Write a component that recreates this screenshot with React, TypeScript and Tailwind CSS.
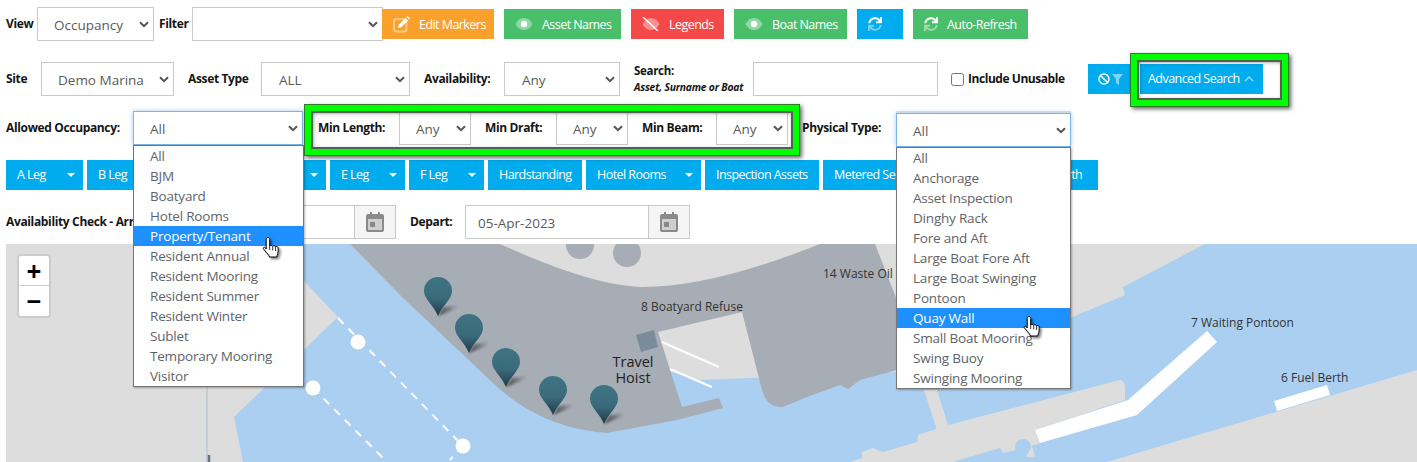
import React from "react";
import { Ban } from "lucide-react";

const occupancy = ["All", "BJM", "Boatyard", "Hotel Rooms", "Property/Tenant", "Resident Annual", "Resident Mooring", "Resident Summer", "Resident Winter", "Sublet", "Temporary Mooring", "Visitor"];
const physical = ["All", "Anchorage", "Asset Inspection", "Dinghy Rack", "Fore and Aft", "Large Boat Fore Aft", "Large Boat Swinging", "Pontoon", "Quay Wall", "Small Boat Mooring", "Swing Buoy", "Swinging Mooring"];

const Chevron = () => (
  <svg width="10" height="7" viewBox="0 0 10 7" className="shrink-0">
    <path d="M1 1.2l4 4 4-4" fill="none" stroke="#555" strokeWidth="2" />
  </svg>
);

const Select = ({ value = "", width, pad, focus }: { value?: string; width: string; pad: string; focus?: boolean }) => (
  <div className={`${width} ${pad} ${focus ? "border-[#7db4e6] shadow-[0_0_5px_#a9cdf0]" : "border-[#c9c9c9]"} h-[34px] shrink-0 flex items-center justify-between pr-[4px] border bg-white text-[13.5px] text-[#5a5a5a]`}>
    <span className="pt-[2px]">{value}</span>
    <Chevron />
  </div>
);

const Label = ({ children, className = "" }: { children: React.ReactNode; className?: string }) => (
  <span className={`text-[12px] font-bold text-[#151515] tracking-[-0.35px] whitespace-nowrap shrink-0 pb-[1px] ${className}`}>{children}</span>
);

const Eye = ({ slash }: { slash?: boolean }) => (
  <svg width="18" height="14" viewBox="0 0 18 14">
    <path d="M.5 7C2.5 3 5.5 1 9 1s6.500 2 8.500 6c-2 4-5 6-8.500 6S2.500 11 .5 7z" fill="#fff" opacity=".4" />
    {!slash && <circle cx="9" cy="7" r="3.200" fill="#fff" />}
    {slash && <path d="M1 0l15 14" stroke="#fff" strokeWidth="1.500" />}
  </svg>
);

const EditIcon = () => (
  <svg width="17" height="17" viewBox="0 0 17 17">
    <rect x="1" y="3" width="12.500" height="12.500" rx="2.500" fill="none" stroke="#fff" strokeOpacity=".45" strokeWidth="2" />
    <path d="M5.500 9L12.500 2l2.500 2.500-7 7-3 .5z" fill="#fff" />
    <path d="M13.500 1l1-1 2.500 2.500-1 1z" fill="#fff" />
  </svg>
);

const Sync = () => (
  <svg width="14" height="14" viewBox="0 0 512 512" fill="#fff">
    <path d="M440.65 12.57l4 82.77A247.16 247.16 0 0 0 255.83 8C134.73 8 33.91 94.92 12.29 209.82A12 12 0 0 0 24.09 224h49.05a12 12 0 0 0 11.67-9.26 175.91 175.91 0 0 1 317-56.94l-101.46-4.86a12 12 0 0 0-12.57 12v47.41a12 12 0 0 0 12 12H500a12 12 0 0 0 12-12V12a12 12 0 0 0-12-12h-47.37a12 12 0 0 0-11.98 12.57z" />
    <path opacity=".45" d="M255.83 432a175.61 175.61 0 0 1-146-77.8l101.8 4.87a12 12 0 0 0 12.57-12v-47.4a12 12 0 0 0-12-12H12a12 12 0 0 0-12 12V500a12 12 0 0 0 12 12h47.35a12 12 0 0 0 12-12.6l-4.15-82.57A247.17 247.17 0 0 0 255.83 504c121.11 0 221.93-86.92 243.55-201.82a12 12 0 0 0-11.8-14.18h-49.05a12 12 0 0 0-11.67 9.26A175.86 175.86 0 0 1 255.83 432z" />
  </svg>
);

const ActionBtn = ({ color, width, icon, children }: { color: string; width: string; icon: React.ReactNode; children?: React.ReactNode }) => (
  <div className={`${color} ${width} h-[30px] shrink-0 flex items-center pl-[11px] gap-[9px] text-white text-[12.5px] tracking-[-0.55px] whitespace-nowrap`}>
    {icon}
    {children && <span className="pt-[2px]">{children}</span>}
  </div>
);

const LegBtn = ({ label, width, caret }: { label: string; width: string; caret?: boolean }) => (
  <div className={`${width} h-[30px] shrink-0 flex items-center justify-between pl-[11px] pr-[8px] bg-[#00aced] text-white text-[12.5px] tracking-[-0.55px] whitespace-nowrap`}>
    <span className="pt-[1px]">{label}</span>
    {caret && <span className="w-0 h-0 border-x-[4px] border-x-transparent border-t-[4px] border-t-white" />}
  </div>
);

const Calendar = () => (
  <div className="w-[41px] h-full shrink-0 flex items-center justify-center border-l border-[#c9c9c9] bg-[#f5f5f5]">
    <svg width="18" height="20" viewBox="0 0 18 20">
      <path d="M4 0h2v3H4zM12 0h2v3h-2z" fill="#8a8a8a" />
      <rect x="0" y="2" width="18" height="18" rx="2" fill="#8a8a8a" />
      <rect x="2" y="7" width="14" height="11" fill="#cfcfcf" />
      <rect x="4" y="10" width="5" height="5" fill="#8a8a8a" />
    </svg>
  </div>
);

const Hand = ({ className }: { className: string }) => (
  <svg width="20" height="26" viewBox="0 0 20 26" className={`absolute drop-shadow-[2px_2px_1px_rgba(0,0,0,0.45)] ${className}`}>
    <path d="M6 1.500c1 0 1.700.8 1.700 1.800V10c.3-.8 2.600-1 3 .3.500-.8 2.500-.8 2.900.5.600-.6 2.400-.4 2.600 1 .1 1.800 0 4-.4 5.600-.4 1.400-1 2.300-1 3.600H7.500c-.3-1.500-1.400-2.600-2.800-4.200L1.500 13c-.8-1 .6-2.400 1.800-1.400L4.200 13V3.300C4.200 2.300 5 1.500 6 1.500z" fill="#fff" stroke="#000" strokeWidth="1" />
    <path d="M7.700 10v4M10.700 10.500v4M13.600 11v4" stroke="#000" strokeWidth=".8" />
  </svg>
);

const Dropdown = ({ items, active, className }: { items: string[]; active: string; className: string }) => (
  <div className={`absolute border border-[#767676] bg-white shadow-[1px_1px_2px_rgba(0,0,0,0.3)] ${className}`}>
    {items.map((item) => (
      <div key={item} className={`${item === active ? "bg-[#1e90ff] text-white" : "text-[#5f6368]"} h-[20px] pl-[16px] leading-[20px] text-[13.5px] tracking-[-0.2px] whitespace-nowrap`}>
        {item}
      </div>
    ))}
  </div>
);

const Highlight = ({ className }: { className: string }) => (
  <div className={`absolute border-[7px] border-[#00ff00] shadow-[2px_2px_4px_rgba(0,0,0,0.6),inset_0_0_0_2px_#555f55,inset_1px_1px_5px_rgba(0,0,0,0.7)] outline outline-1 -outline-offset-1 outline-[#2f7a2f] ${className}`} />
);

const pins = [[438, 316], [469, 353], [506, 387], [553, 415], [604, 424]];

const MapArt = () => (
  <svg viewBox="6 244 1411 218" className="block w-full h-full" style={{ fontFamily: "'Open Sans', sans-serif" }}>
    <defs>
      <linearGradient id="pin" x1="0" y1="0" x2="0" y2="1">
        <stop offset="0" stopColor="#3f7485" />
        <stop offset=".55" stopColor="#3a6a7a" />
        <stop offset="1" stopColor="#1f3a46" />
      </linearGradient>
      <linearGradient id="pinShadow" x1="0" y1="0" x2="1" y2="0">
        <stop offset="0" stopColor="#222" stopOpacity=".75" />
        <stop offset="1" stopColor="#222" stopOpacity="0" />
      </linearGradient>
      <filter id="soft" x="-30%" y="-60%" width="160%" height="220%">
        <feGaussianBlur stdDeviation="1" />
      </filter>
    </defs>
    <rect x="6" y="244" width="1411" height="218" fill="#dddddd" />
    <path d="M303 244L350 244 400 295 700 380 897 372 1070 318 1125 295 1123 287 1205 244 1417 244 1417 370 1107 462 243 462 234 417 338 317 303 280Z" fill="#abcff0" />
    <path d="M850 462L862 458 862 452 873 448 883 452 917 442 918 435 948 425 1120 380Q1125 381 1125 387L1125 400 1035 430 1040 443 1032 446 1003 453 1000 448 953 462Z" fill="#dddddd" />
    <path d="M924 390L937 430 948 425 937 390Z" fill="#dddddd" />
    <circle cx="1023" cy="447" r="8" fill="#abcff0" />
    <path d="M1032 446L1035 457 1026 457Z" fill="#dddddd" />
    <path d="M1035 430L1128 400 1207 331 1217 342 1137 415 1040 443Z" fill="#fff" />
    <path d="M1274 401L1327 385 1330 395 1277 411Z" fill="#fff" />
    <path d="M350 244L400 295 493 383Q540 428 607 433L677 420 723 408 719 398 682 407 658 332 742 312 762 390Q767 408 783 407L807 397 840 385 848 389 860 380 897 370 897 300 875 244 820 244Q710 288 640 287 590 285 500 244Z" fill="#a7adb5" />
    <circle cx="580" cy="245" r="14" fill="#a7adb5" />
    <circle cx="627" cy="253" r="14" fill="#a7adb5" />
    <path d="M636 335L654 330 658 347 641 352Z" fill="#7a8c9a" />
    <path d="M662 342L719 367M670 369L712 387" stroke="#fff" strokeWidth="2" />
    <path d="M338 318L463 446M313 388L385 460M463 446L450 460" stroke="#fff" strokeWidth="2" strokeDasharray="8 7" />
    <circle cx="358" cy="342" r="7.500" fill="#fff" />
    <circle cx="313" cy="388" r="7.500" fill="#fff" />
    <circle cx="463" cy="446" r="7.500" fill="#fff" />
    <path d="M207 385V462" stroke="#bcc6cf" strokeWidth="1.500" />
    <path d="M209 455V462" stroke="#66727c" strokeWidth="2.500" />
    <g fontSize="12" fill="#333">
      <text x="641" y="311">8 Boatyard Refuse</text>
      <text x="823" y="278">14 Waste Oil</text>
      <text x="1191" y="327">7 Waiting Pontoon</text>
      <text x="1281" y="382">6 Fuel Berth</text>
    </g>
    <g fontSize="14.500" fill="#222" textAnchor="middle">
      <text x="633" y="367">Travel</text>
      <text x="633" y="383">Hoist</text>
    </g>
    {pins.map(([x, y]) => (
      <g key={x} transform={`translate(${x} ${y})`}>
        <path d="M0 0L20-8 20-11 6-9Z" fill="url(#pinShadow)" filter="url(#soft)" />
        <path d="M0 0C-4-10-14-17-14-25A14 14 0 1 1 14-25C14-17 4-10 0 0Z" fill="url(#pin)" />
      </g>
    ))}
  </svg>
);

export default function App() {
  return (
    <div className="relative h-[462px] overflow-hidden bg-white font-['Open_Sans',sans-serif]">
      <div className="pl-[6px] pt-[7px]">
        <div className="flex items-center h-[34px]">
          <Label className="w-[31px]">View</Label>
          <Select value="Occupancy" width="w-[117px]" pad="pl-[16px]" />
          <Label className="w-[38px] pl-[5px]">Filter</Label>
          <Select width="w-[191px]" pad="pl-[16px]" />
          <div className="flex items-center gap-[10px] -ml-px">
            <ActionBtn color="bg-[#f9a12a]" width="w-[112px]" icon={<EditIcon />}>Edit Markers</ActionBtn>
            <ActionBtn color="bg-[#4abf6b]" width="w-[117px]" icon={<Eye />}>Asset Names</ActionBtn>
            <ActionBtn color="bg-[#f54848]" width="w-[93px]" icon={<Eye slash />}>Legends</ActionBtn>
            <ActionBtn color="bg-[#4abf6b]" width="w-[113px]" icon={<Eye />}>Boat Names</ActionBtn>
            <ActionBtn color="bg-[#00aced]" width="w-[46px]" icon={<Sync />} />
            <ActionBtn color="bg-[#4abf6b]" width="w-[115px]" icon={<Sync />}>Auto-Refresh</ActionBtn>
          </div>
        </div>

        <div className="flex items-center h-[34px] mt-[21px]">
          <Label className="w-[35px]">Site</Label>
          <Select value="Demo Marina" width="w-[133px]" pad="pl-[16px]" />
          <Label className="w-[73px] ml-[14px]">Asset Type</Label>
          <Select value="ALL" width="w-[149px]" pad="pl-[17px]" />
          <Label className="w-[80px] ml-[14px]">Availability:</Label>
          <Select value="Any" width="w-[116px]" pad="pl-[17px]" />
          <div className="w-[119px] ml-[14px] pb-[1px] flex flex-col text-[#151515] font-bold whitespace-nowrap">
            <span className="text-[11.500px] tracking-[-0.3px] leading-[16px]">Search:</span>
            <span className="text-[10.300px] italic tracking-[-0.2px] leading-[16px]">Asset, Surname or Boat</span>
          </div>
          <input readOnly className="w-[185px] h-[34px] shrink-0 border border-[#c9c9c9]" />
          <input type="checkbox" readOnly className="ml-[13px] w-[13px] h-[13px] shrink-0" />
          <span className="ml-[4px] w-[120px] text-[12px] font-bold text-[#151515] tracking-[-0.45px] whitespace-nowrap">Include Unusable</span>
          <div className="flex items-center gap-[4px] h-[30px]">
            <div className="w-[48px] h-full shrink-0 flex items-center pl-[10px] gap-[2px] bg-[#00aced]">
              <Ban size={12} color="#fff" strokeWidth={3} />
              <svg width="11" height="11" viewBox="0 0 11 11"><path d="M0 0h11L7 5v6L4 9V5z" fill="#fff" opacity=".5" /></svg>
            </div>
            <div className="w-[123px] h-full shrink-0 flex items-center pl-[8px] gap-[4px] bg-[#00aced] text-white text-[12.500px] tracking-[-0.55px] whitespace-nowrap">
              <span className="pt-[1px]">Advanced Search</span>
              <svg width="10" height="6" viewBox="0 0 10 6"><path d="M1 5l4-4 4 4" fill="none" stroke="#fff" strokeOpacity=".55" strokeWidth="1.500" /></svg>
            </div>
          </div>
        </div>

        <div className="flex items-center h-[34px] mt-[15px]">
          <Label className="w-[127px]">Allowed Occupancy:</Label>
          <Select value="All" width="w-[170px]" pad="pl-[16px]" focus />
          <Label className="w-[81px] ml-[15px]">Min Length:</Label>
          <Select value="Any" width="w-[72px]" pad="pl-[16px]" />
          <Label className="w-[71px] ml-[14px]">Min Draft:</Label>
          <Select value="Any" width="w-[72px]" pad="pl-[16px]" />
          <Label className="w-[74px] ml-[14px]">Min Beam:</Label>
          <Select value="Any" width="w-[72px]" pad="pl-[16px]" />
          <Label className="w-[94px] ml-[14px]">Physical Type:</Label>
          <div className="mt-[4px] shadow-[0_-2px_0_#dedede]">
            <Select value="All" width="w-[175px]" pad="pl-[16px]" focus />
          </div>
        </div>

        <div className="flex items-center gap-[4px] mt-[15px]">
          <LegBtn label="A Leg" width="w-[77px]" caret />
          <LegBtn label="B Leg" width="w-[75px]" caret />
          <LegBtn label="C Leg" width="w-[75px]" caret />
          <LegBtn label="D Leg" width="w-[81px]" caret />
          <LegBtn label="E Leg" width="w-[75px]" caret />
          <LegBtn label="F Leg" width="w-[75px]" caret />
          <LegBtn label="Hardstanding" width="w-[94px]" />
          <LegBtn label="Hotel Rooms" width="w-[115px]" caret />
          <LegBtn label="Inspection Assets" width="w-[114px]" />
          <LegBtn label="Metered Services" width="w-[179px]" />
          <LegBtn label="Visitor Berth" width="w-[92px]" />
        </div>

        <div className="flex items-center h-[34px] mt-[15px]">
          <Label className="w-[190px]">Availability Check - Arrive:</Label>
          <div className="w-[200px] h-full shrink-0 flex justify-end border border-[#c9c9c9]">
            <Calendar />
          </div>
          <Label className="w-[55px] ml-[14px]">Depart:</Label>
          <div className="w-[225px] h-full shrink-0 flex items-center justify-between border border-[#c9c9c9] pl-[12px] text-[13.500px] text-[#5a5a5a]">
            <span className="pt-[2px]">05-Apr-2023</span>
            <Calendar />
          </div>
        </div>

        <div className="relative h-[218px] mt-[5px]">
          <MapArt />
          <div className="absolute left-[11px] top-[10px] w-[34px] rounded-[4px] border-2 border-black/20 bg-white text-black">
            <div className="h-[30px] flex items-center justify-center border-b border-[#ccc] text-[26px] font-bold leading-none">+</div>
            <div className="h-[30px] flex items-center justify-center text-[26px] font-bold leading-none">−</div>
          </div>
        </div>
      </div>

      <Dropdown items={occupancy} active="Property/Tenant" className="w-[171px] left-[133px] top-[145px]" />
      <Dropdown items={physical} active="Quay Wall" className="w-[175px] left-[896px] top-[147px]" />
      <Hand className="left-[262px] top-[236px]" />
      <Hand className="left-[1023px] top-[315px]" />
      <Highlight className="left-[304px] top-[104px] w-[496px] h-[52px]" />
      <Highlight className="left-[1130px] top-[53px] w-[159px] h-[54px]" />
    </div>
  );
}
